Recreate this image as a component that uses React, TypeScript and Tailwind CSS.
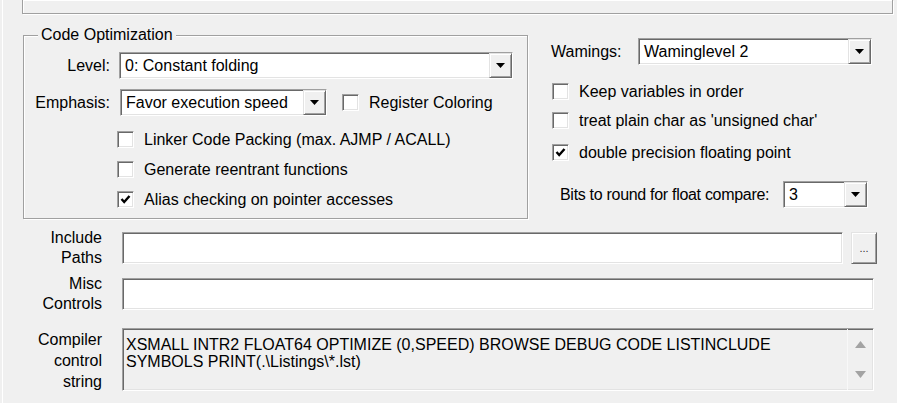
import React from "react";

// classic win32 3D edges
const sunken =
  "border border-t-[#a0a0a0] border-l-[#a0a0a0] border-r-white border-b-white shadow-[inset_1px_1px_0_#696969,inset_-1px_-1px_0_#e3e3e3]";
const raised =
  "border border-t-[#e3e3e3] border-l-[#e3e3e3] border-r-[#696969] border-b-[#696969] shadow-[inset_1px_1px_0_#ffffff,inset_-1px_-1px_0_#a0a0a0]";
const etched = "border border-[#a0a0a0] shadow-[1px_1px_0_#ffffff,inset_1px_1px_0_#ffffff]";

const DownArrow = () => (
  <svg width="9" height="5" viewBox="0 0 9 5">
    <path d="M0 0 L9 0 L4.5 5 Z" fill="#000" />
  </svg>
);

interface ComboProps {
  value: string;
  className?: string;
}

const Combo = ({ value, className }: ComboProps) => (
  <div className={`flex h-[27px] bg-white ${sunken} ${className ?? ""}`}>
    <span className="flex-1 pl-[5px] leading-[25px] whitespace-nowrap overflow-hidden">{value}</span>
    <span className={`w-[23px] h-full bg-[#f0f0f0] flex items-center justify-center ${raised}`}>
      <DownArrow />
    </span>
  </div>
);

const CheckBox = ({ checked }: { checked?: boolean }) => (
  <span className={`w-[17px] h-[17px] shrink-0 bg-white flex items-center justify-center ${sunken}`}>
    {checked && (
      <svg width="11" height="11" viewBox="0 0 11 11">
        <path d="M1.5 5 L4.2 8 L9.5 2" stroke="#000" strokeWidth="2.4" fill="none" />
      </svg>
    )}
  </span>
);

const CheckRow = ({ label, checked }: { label: string; checked?: boolean }) => (
  <div className="flex items-center gap-[10px] h-[17px]">
    <CheckBox checked={checked} />
    <span className="whitespace-nowrap">{label}</span>
  </div>
);

const FieldLabel = ({ lines }: { lines: string[] }) => (
  <div className="w-[99px] shrink-0 text-right leading-[20px]">
    {lines.map((l) => (
      <div key={l}>{l}</div>
    ))}
  </div>
);

export default function App() {
  return (
    <div className="w-[897px] h-[403px] overflow-hidden bg-[#f0f0f0] pl-[2px] font-['Liberation_Sans',Arial,sans-serif] text-[16px] text-black">
      <div className="h-full border-l border-white">
        {/* box above, cut off by the top edge */}
        <div className={`ml-[19px] w-[871px] h-[14px] border-t-0 ${etched}`} />

        <div className="flex mt-[21px]">
          {/* Code Optimization group */}
          <div className={`relative ml-[20px] w-[505px] h-[184px] ${etched}`}>
            <span className="absolute -top-[10px] left-[14px] px-[3px] bg-[#f0f0f0] leading-[18px]">
              Code Optimization
            </span>

            <div className="flex items-center mt-[16px]">
              <span className="w-[86px] text-right">Level:</span>
              <Combo value="0: Constant folding" className="ml-[9px] w-[394px]" />
            </div>

            <div className="flex items-center mt-[10px]">
              <span className="w-[86px] text-right">Emphasis:</span>
              <Combo value="Favor execution speed" className="ml-[10px] w-[207px]" />
              <div className="ml-[15px]">
                <CheckRow label="Register Coloring" />
              </div>
            </div>

            <div className="flex flex-col gap-[13px] ml-[93px] mt-[15px]">
              <CheckRow label="Linker Code Packing (max. AJMP / ACALL)" />
              <CheckRow label="Generate reentrant functions" />
              <CheckRow label="Alias checking on pointer accesses" checked />
            </div>
          </div>

          {/* right column */}
          <div className="ml-[23px] mt-[3px] flex flex-col">
            <div className="flex items-center">
              <span className="w-[87px]">Wamings:</span>
              <Combo value="Waminglevel 2" className="w-[234px]" />
            </div>
            <div className="flex flex-col gap-[12px] ml-[1px] mt-[18px]">
              <CheckRow label="Keep variables in order" />
              <CheckRow label="treat plain char as 'unsigned char'" />
            </div>
            <div className="ml-[1px] mt-[15px]">
              <CheckRow label="double precision floating point" checked />
            </div>
            <div className="flex items-center ml-[9px] mt-[20px]">
              <span className="w-[223px] whitespace-nowrap tracking-[-0.3px]">Bits to round for float compare:</span>
              <Combo value="3" className="w-[85px]" />
            </div>
          </div>
        </div>

        {/* bottom fields */}
        <div className="flex flex-col mt-[9px]">
          <div className="flex items-center">
            <FieldLabel lines={["Include", "Paths"]} />
            <div className={`ml-[20px] w-[721px] h-[32px] bg-white ${sunken}`} />
            <button className={`ml-[8px] w-[26px] h-[32px] bg-[#f0f0f0] text-[11px] text-[#333] leading-[28px] ${raised}`}>
              ...
            </button>
          </div>

          <div className="flex items-center mt-[6px]">
            <FieldLabel lines={["Misc", "Controls"]} />
            <div className={`ml-[20px] w-[752px] h-[32px] bg-white ${sunken}`} />
          </div>

          <div className="flex items-center mt-[12px]">
            <div className="w-[99px] shrink-0 text-right leading-[21px] mt-[3px]">
              <div>Compiler</div>
              <div>control</div>
              <div>string</div>
            </div>
            <div className={`ml-[20px] w-[752px] h-[63px] flex bg-[#f0f0f0] ${sunken}`}>
              <div className="flex-1 pl-[3px] pt-[7px] leading-[17px] whitespace-pre">
                {"XSMALL INTR2 FLOAT64 OPTIMIZE (0,SPEED) BROWSE DEBUG CODE LISTINCLUDE\nSYMBOLS PRINT(.\\Listings\\*.lst)"}
              </div>
              <div className="w-[26px] border-l border-[#f8f8f8] flex flex-col items-center justify-between py-[12px]">
                <svg width="11" height="7" viewBox="0 0 11 7">
                  <path d="M0 7 L5.5 0 L11 7 Z" fill="#a3a3a3" />
                </svg>
                <svg width="11" height="7" viewBox="0 0 11 7">
                  <path d="M0 0 L11 0 L5.5 7 Z" fill="#a3a3a3" />
                </svg>
              </div>
            </div>
          </div>
        </div>
      </div>
    </div>
  );
}
